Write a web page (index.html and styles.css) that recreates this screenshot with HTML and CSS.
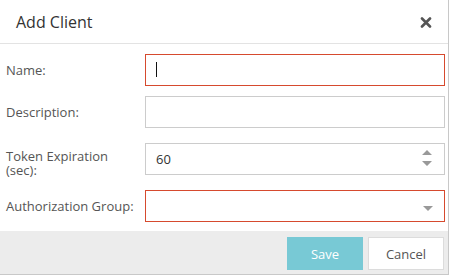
FILE: index.html
```html
<!DOCTYPE html>
<html lang="en">
<head>
    <meta charset="UTF-8">
    <meta name="viewport" content="width=device-width, initial-scale=1.0">
    <title>Add Client</title>
    <link rel="stylesheet" href="styles.css">
</head>
<body>
    <div class="dialog">
        <div class="dialog-header">
            <h1>Add Client</h1>
            <span class="close">
                <svg width="12" height="11" viewBox="0 0 12 11"><path d="M2 1.5 L10 9.5 M10 1.5 L2 9.5" stroke="#555" stroke-width="2.6" stroke-linecap="round"/></svg>
            </span>
        </div>
        <div class="dialog-body">
            <div class="row">
                <label>Name:</label>
                <div class="field invalid">
                    <input type="text">
                    <span class="caret"></span>
                </div>
            </div>
            <div class="row">
                <label>Description:</label>
                <div class="field">
                    <input type="text">
                </div>
            </div>
            <div class="row tall">
                <label>Token Expiration (sec):</label>
                <div class="field">
                    <input type="text" value="60">
                    <span class="spinner">
                        <svg width="10" height="17" viewBox="0 0 10 17"><path d="M5 0 L10 5 L0 5 Z M0 11 L10 11 L5 16 Z" fill="#999"/></svg>
                    </span>
                </div>
            </div>
            <div class="row">
                <label>Authorization Group:</label>
                <div class="field invalid">
                    <input type="text">
                    <span class="arrow">
                        <svg width="10" height="5" viewBox="0 0 10 5"><path d="M0 0 L10 0 L5 5 Z" fill="#999"/></svg>
                    </span>
                </div>
            </div>
        </div>
        <div class="dialog-footer">
            <button class="btn btn-save">Save</button>
            <button class="btn btn-cancel">Cancel</button>
        </div>
    </div>
</body>
</html>
```

FILE: styles.css
```css
body{
    margin: 0;
    font-family: "Open Sans", "Liberation Sans", sans-serif;
    background: white;
}
.dialog{
    width: 448px;
    border-right: 1px solid #c8c8c8;
    border-bottom: 1px solid #c8c8c8;
    background: white;
}
.dialog-header{
    height: 43px;
    border-bottom: 1px solid #e3e3e3;
    display: flex;
    justify-content: space-between;
    align-items: center;
    padding: 0 16px 0 16px;
}
.dialog-header h1{
    margin: 0;
    font-size: 16px;
    font-weight: normal;
    color: #333;
}
.close{
    display: flex;
    margin-top: 1px;
}

/* FORM */
.dialog-body{
    padding: 10px 3px 9px 6px;
    display: flex;
    flex-direction: column;
    gap: 10px;
}
.row{
    display: flex;
    align-items: center;
}
.row.tall{
    padding: 5px 0;
    align-items: flex-start;
}
.row label{
    width: 139px;
    flex-shrink: 0;
    font-size: 13px;
    line-height: 14px;
    color: #555;
    padding-right: 6px;
    box-sizing: border-box;
}
.row.tall label{
    padding-top: 6px;
    height: 32px;
}
.field{
    flex: 1;
    position: relative;
    height: 32px;
}
.field input{
    width: 100%;
    height: 32px;
    box-sizing: border-box;
    border: 1px solid #cccccc;
    padding: 0 10px;
    font-family: inherit;
    font-size: 13px;
    color: #333;
    outline: none;
}
.field.invalid input{
    border-color: #d64a2e;
}
.caret{
    position: absolute;
    left: 11px;
    top: 8px;
    width: 1px;
    height: 15px;
    background: #111;
}
.spinner{
    position: absolute;
    right: 13px;
    top: 7px;
    display: flex;
}
.arrow{
    position: absolute;
    right: 12px;
    top: 16px;
    display: flex;
}

/* FOOTER */
.dialog-footer{
    background-color: #ececec;
    display: flex;
    justify-content: flex-end;
    gap: 5px;
    padding: 6px 4px 4px 6px;
}
.btn{
    width: 76px;
    height: 33px;
    font-family: inherit;
    font-size: 13px;
    border-radius: 0;
    cursor: pointer;
}
.btn-save{
    background-color: #78c9d5;
    border: none;
    color: white;
}
.btn-cancel{
    background-color: white;
    border: 1px solid #dcdcdc;
    color: #555;
}
```
